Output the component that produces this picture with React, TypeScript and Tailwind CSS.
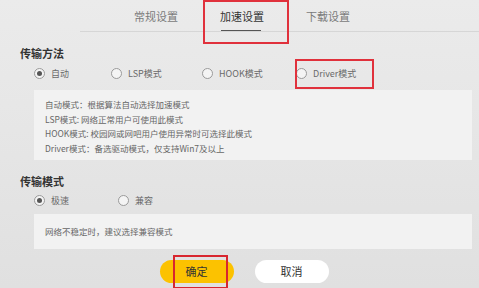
import React from 'react'

const font = { fontFamily: '"Noto Sans CJK SC", "Noto Sans", sans-serif' }

const Radio = ({ label, checked }: { label: string; checked?: boolean }) => (
    <div className="flex items-center gap-[6px]">
        <span className="w-[11px] h-[11px] rounded-full border border-[#9a9a9a] bg-[#f4f4f4] flex items-center justify-center">
            {checked && <span className="w-[5px] h-[5px] rounded-full bg-[#555]" />}
        </span>
        <span className="text-[9px] text-[#6a6a6a] leading-none">{label}</span>
    </div>
)

const App = () => {
    return (
        <div className="relative w-[479px] h-[288px] overflow-hidden bg-gradient-to-b from-[#ebebeb] to-[#e0e0e0]" style={font}>
            {/* tabs */}
            <div className="relative h-[32px] flex items-end pl-[134px] gap-[42px]">
                <div className="h-[31px] flex items-center text-[11px] text-[#7a7a7a]">常规设置</div>
                <div className="relative h-[31px] flex items-center text-[11px] text-[#333]">
                    加速设置
                    <span className="absolute left-[1px] right-[3px] bottom-[0px] h-[2px] bg-[#555]" />
                </div>
                <div className="h-[31px] flex items-center text-[11px] text-[#7a7a7a]">下载设置</div>
                <div className="absolute left-[80px] right-0 bottom-0 h-px bg-[#d6d6d6]" />
            </div>

            <div className="pl-[20px] pr-[7px]">
                <h2 className="mt-[13px] text-[11px] font-bold text-[#333] leading-[16px]">传输方法</h2>
                <div className="mt-[5px] ml-[14px] h-[14px] flex items-center">
                    <div className="w-[77px]"><Radio label="自动" checked /></div>
                    <div className="w-[91px]"><Radio label="LSP模式" /></div>
                    <div className="w-[94px]"><Radio label="HOOK模式" /></div>
                    <Radio label="Driver模式" />
                </div>
                <div className="mt-[10px] ml-[14px] h-[70px] bg-[#f2f2f2] pl-[11px] pt-[7px] text-[8.5px] text-[#666] leading-[14.5px]">
                    <p>自动模式：根据算法自动选择加速模式</p>
                    <p>LSP模式: 网络正常用户可使用此模式</p>
                    <p>HOOK模式: 校园网或网吧用户使用异常时可选择此模式</p>
                    <p>Driver模式：备选驱动模式，仅支持Win7及以上</p>
                </div>

                <h2 className="mt-[13px] text-[11px] font-bold text-[#333] leading-[16px]">传输模式</h2>
                <div className="mt-[4px] ml-[14px] h-[14px] flex items-center">
                    <div className="w-[84px]"><Radio label="极速" checked /></div>
                    <Radio label="兼容" />
                </div>
                <div className="mt-[7px] ml-[14px] h-[35px] bg-[#f2f2f2] pl-[11px] flex items-center text-[8.5px] text-[#666]">
                    网络不稳定时，建议选择兼容模式
                </div>

                <div className="mt-[11px] flex justify-center gap-[21px] pr-[4px]">
                    <button className="w-[74px] h-[23px] rounded-full bg-[#fcc200] text-[11px] text-[#333]">确定</button>
                    <button className="w-[74px] h-[23px] rounded-full bg-white text-[11px] text-[#333]">取消</button>
                </div>
            </div>

            {/* red annotation boxes */}
            <div className="absolute left-[203px] top-0 w-[86px] h-[44px] border-2 border-[#e0313c]" />
            <div className="absolute left-[295px] top-[59px] w-[79px] h-[30px] border-2 border-[#e0313c]" />
            <div className="absolute left-[173px] top-[255px] w-[55px] h-[34px] border-2 border-[#d8262f]" />
        </div>
    )
}

export default App
